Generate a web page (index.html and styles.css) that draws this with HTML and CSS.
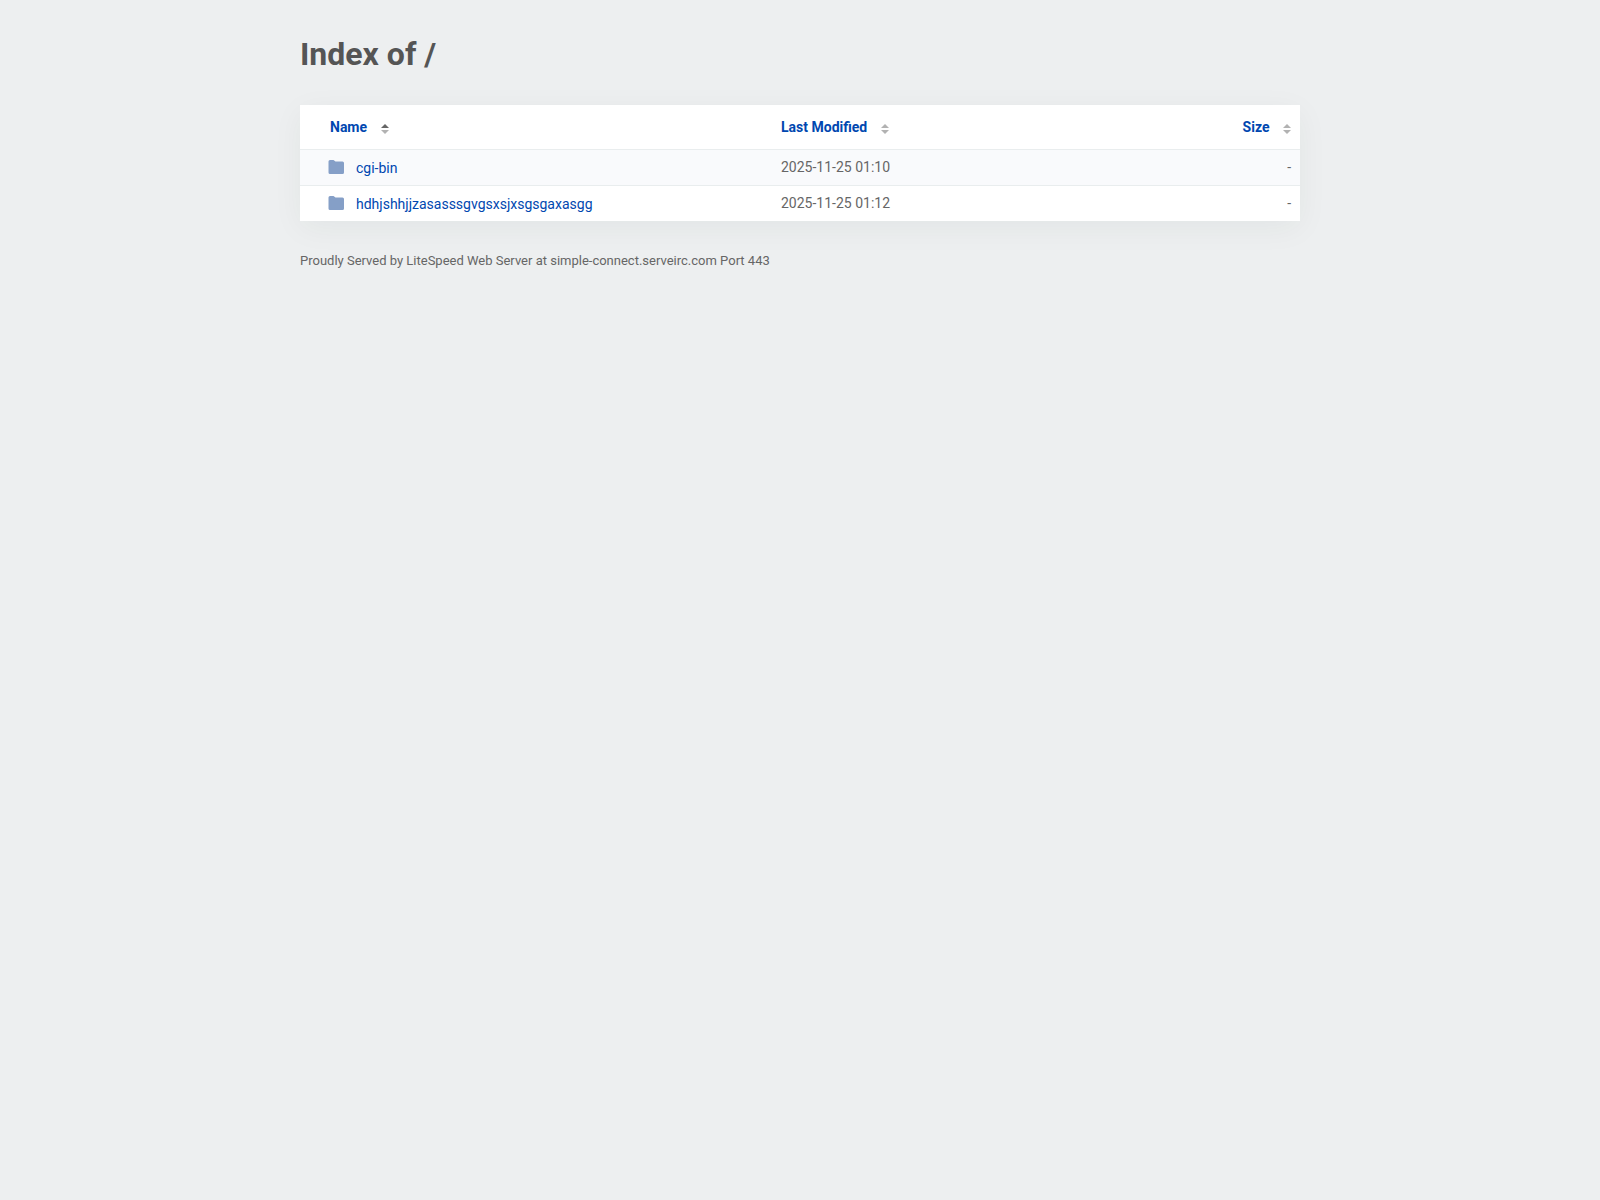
FILE: index.html
```html
<!DOCTYPE html>
<html lang="en">
  <head>
    <meta charset="UTF-8" />
    <meta name="viewport" content="width=device-width, initial-scale=1.0" />
    <title>Index of /</title>
    <link rel="stylesheet" href="styles.css">
  </head>
  <body>
    <div class="content">
      <h1>Index of /</h1>
      <table id="table-list">
        <thead>
          <tr>
            <th class="name" aria-sort="ascending">
              <a href="#" class="sort">Name
                <svg class="arrows" viewBox="0 0 8 10"><path class="up active" d="M4 0L8 4H0Z" /><path d="M0 6H8L4 10Z" /></svg></a>
            </th>
            <th class="modified">
              <a href="#" class="sort">Last Modified
                <svg class="arrows" viewBox="0 0 8 10"><path class="up" d="M4 0L8 4H0Z" /><path d="M0 6H8L4 10Z" /></svg></a>
            </th>
            <th class="size">
              <a href="#" class="sort">Size
                <svg class="arrows" viewBox="0 0 8 10"><path class="up" d="M4 0L8 4H0Z" /><path d="M0 6H8L4 10Z" /></svg></a>
            </th>
          </tr>
        </thead>
        <tbody>
          <tr>
            <td class="name">
              <a href="cgi-bin/"><svg class="folder" viewBox="0 0 16 14"><path d="M2 0H5.500L7.500 1.500H14.500Q16 1.500 16 3V12.500Q16 14 14.500 14H2Q0.500 14 0.500 12.500V1.500Q0.500 0 2 0Z" /></svg>cgi-bin</a>
            </td>
            <td>2025-11-25 01:10</td>
            <td class="size">-</td>
          </tr>
          <tr>
            <td class="name">
              <a href="hdhjshhjjzasasssgvgsxsjxsgsgaxasgg/"><svg class="folder" viewBox="0 0 16 14"><path d="M2 0H5.500L7.500 1.500H14.500Q16 1.500 16 3V12.500Q16 14 14.500 14H2Q0.500 14 0.500 12.500V1.500Q0.500 0 2 0Z" /></svg>hdhjshhjjzasasssgvgsxsjxsgsgaxasgg</a>
            </td>
            <td>2025-11-25 01:12</td>
            <td class="size">-</td>
          </tr>
        </tbody>
      </table>
      <address>Proudly Served by LiteSpeed Web Server at simple-connect.serveirc.com Port 443</address>
    </div>
  </body>
</html>
```
FILE: styles.css
```css
body {
  margin: 0;
  background: #edeff0;
  color: #666;
  font-family: Roboto, sans-serif;
  font-size: 14px;
  line-height: 17px;
}
.content {
  max-width: 1000px;
  margin: 0 auto;
  padding: 35px 20px;
}
h1 {
  margin: 0 0 32px;
  color: #555;
  font-size: 32px;
  line-height: 38px;
}
table {
  width: 100%;
  table-layout: fixed;
  border-collapse: collapse;
  background: #fff;
  box-shadow: 0 7px 29px rgba(0, 50, 40, 0.05);
}
th,
td {
  padding: 9px;
  text-align: left;
}
th {
  padding: 14px 9px 13px;
}
td {
  border-top: 1px solid #e9edee;
}
tbody tr:nth-child(odd) {
  background: #f9fafc;
}
th.name {
  width: 433px;
  padding-left: 30px;
}
td.name {
  padding: 10px 9px 8px 28px;
}
th.size,
td.size {
  text-align: right;
}
a {
  color: #0047b0;
  text-decoration: none;
}
a:hover {
  text-decoration: underline;
}
.arrows {
  width: 8px;
  height: 10px;
  margin-left: 10px;
  vertical-align: -2px;
  fill: #b2b2b2;
}
.arrows .active {
  fill: #666;
}
.folder {
  width: 16px;
  height: 14px;
  margin-right: 12px;
  vertical-align: -1px;
  fill: #859fc7;
}
address {
  margin-top: 31px;
  font-size: 13px;
  font-style: normal;
}
```
